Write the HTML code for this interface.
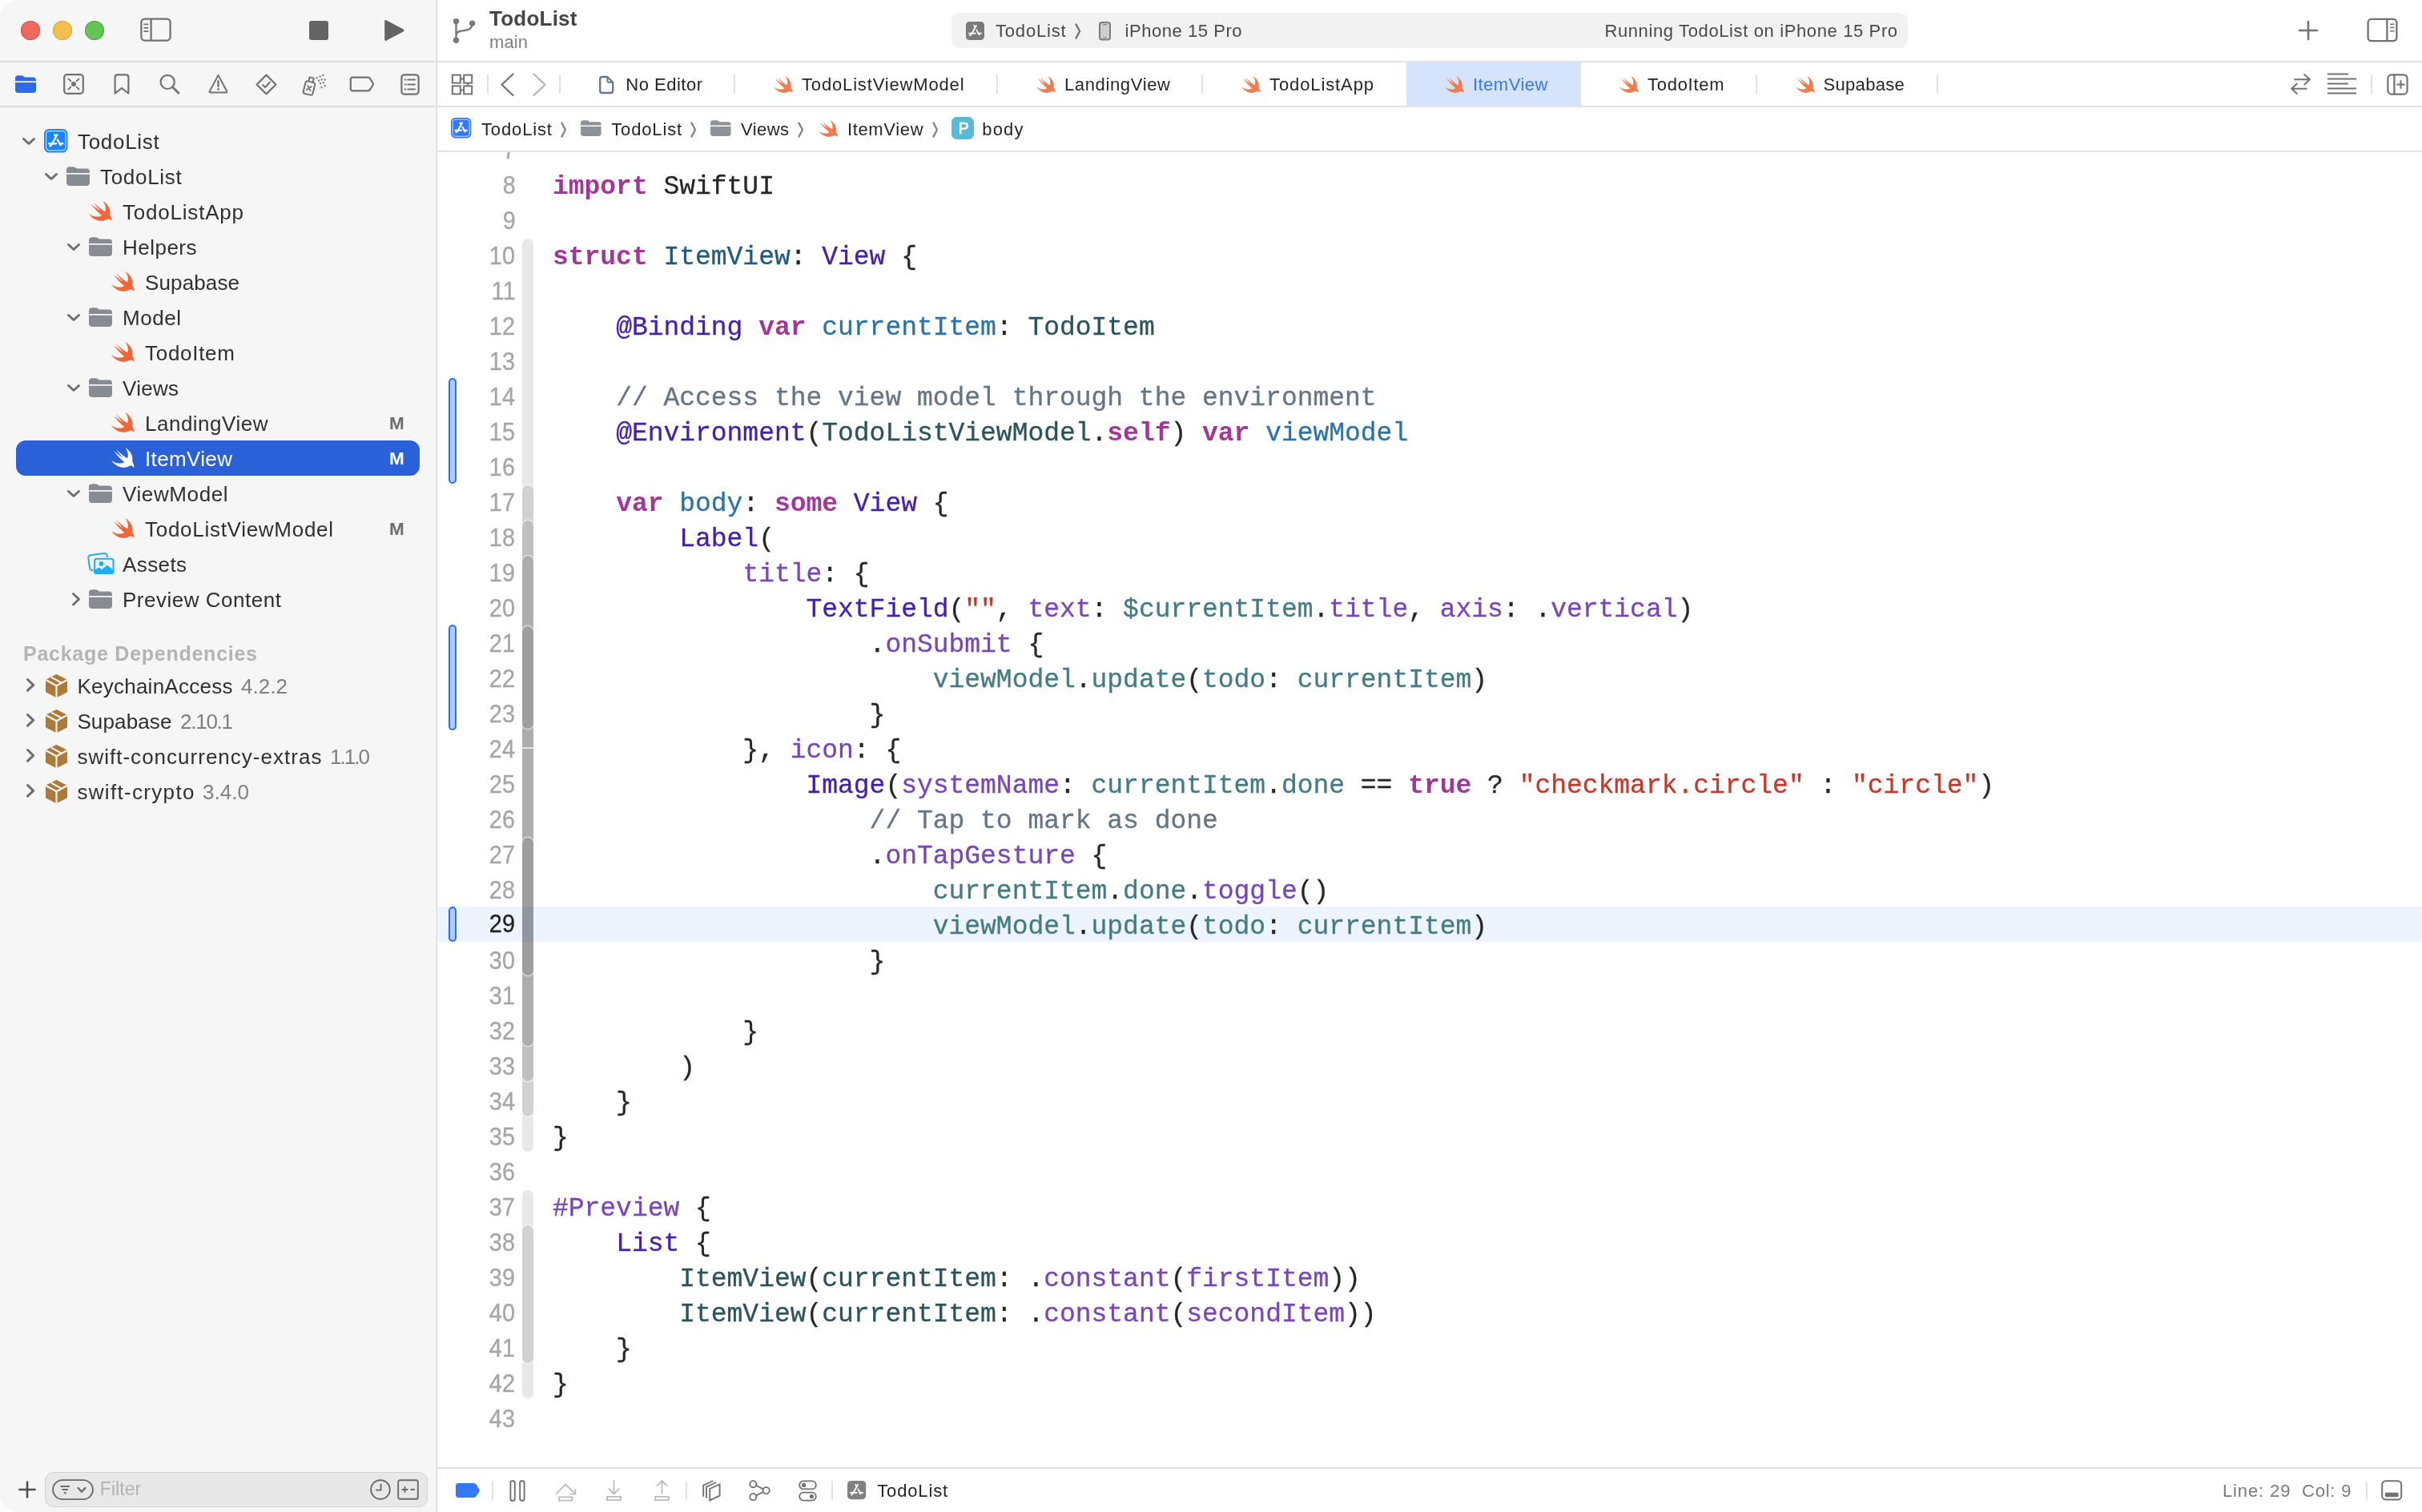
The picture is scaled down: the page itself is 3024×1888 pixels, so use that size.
<!DOCTYPE html>
<html lang="en"><head><meta charset="utf-8"><title>TodoList — ItemView.swift</title>
<style>
html,body{margin:0;padding:0}
body{width:3024px;height:1888px;position:relative;overflow:hidden;background:#fff;font-family:"Liberation Sans",sans-serif}
.t{position:absolute;white-space:pre;font-family:"Liberation Sans",sans-serif}
.ln{font-size:32px;line-height:40px;letter-spacing:.4px;transform:scaleX(.9);transform-origin:100% 50%;-webkit-text-stroke:.35px}
.m{font-family:"Liberation Mono",monospace;-webkit-text-stroke:.3px}
.k{-webkit-text-stroke:0}
#win{position:absolute;left:0;top:0;width:3024px;height:1888px;will-change:transform}
svg{display:block;overflow:visible}
.k{color:#a2379a;font-weight:700}
.c{color:#677583}.s{color:#c6382a}
.td{color:#21597f}.od{color:#2b73a7}
.pc{color:#2b5358}.pf{color:#457b82}
.oc{color:#4421a8}.of{color:#7748b5}
</style></head>
<body>
<div id="win">
<div style="position:absolute;left:0;top:0;width:544px;height:1888px;background:#f6f6f6;border-radius:22px 0 0 22px"></div>
<div style="position:absolute;left:544px;top:0px;width:1px;height:1888px;background:#ededed;"></div>
<div style="position:absolute;left:545px;top:0px;width:1px;height:1888px;background:#dadada;"></div>
<div style="position:absolute;left:0px;top:76px;width:544px;height:2px;background:#dcdcdc;"></div>
<div style="position:absolute;left:0px;top:132px;width:544px;height:2px;background:#dcdcdc;"></div>
<div style="position:absolute;left:26px;top:26px;width:24px;height:24px;border-radius:50%;background:#ed6a5f;box-shadow:inset 0 0 0 1px #d5504a"></div>
<div style="position:absolute;left:66px;top:26px;width:24px;height:24px;border-radius:50%;background:#f5bf4f;box-shadow:inset 0 0 0 1px #d8a13a"></div>
<div style="position:absolute;left:106px;top:26px;width:24px;height:24px;border-radius:50%;background:#62c554;box-shadow:inset 0 0 0 1px #4fa73f"></div>
<svg style="position:absolute;left:28.2px;top:172.3px" width="16" height="9" viewBox="0 0 16 9" ><polyline points="1.5,1.5 8.0,7.5 14.5,1.5" fill="none" stroke="#6e6e6e" stroke-width="3" stroke-linecap="round" stroke-linejoin="round"/></svg>
<svg style="position:absolute;left:54.5px;top:161.2px" width="29.5" height="29.5" viewBox="0 0 30 30" ><rect x="0" y="0" width="30" height="30" rx="6.5" fill="#1b84fb"/><rect x="2.6" y="2.6" width="24.8" height="24.8" rx="4.2" fill="none" stroke="#fff" stroke-opacity=".75" stroke-width="1.3"/><g fill="none" stroke="#fff" stroke-width="2.3" stroke-linecap="round"><path d="M16.6 7.4 L9.2 20.6"/><path d="M13.4 7.4 L15 10.2"/><path d="M16.9 13.6 L20.9 20.6"/><path d="M6.2 18.6 H15.4"/><path d="M19.3 18.6 H23.8"/><path d="M7.6 21.8 L8.3 20.6"/></g></svg>
<div class="t" style="left:97.0px;top:159.99px;font-size:26px;line-height:34px;color:#303030;letter-spacing:0.700px;">TodoList</div>
<svg style="position:absolute;left:56.2px;top:216.3px" width="16" height="9" viewBox="0 0 16 9" ><polyline points="1.5,1.5 8.0,7.5 14.5,1.5" fill="none" stroke="#6e6e6e" stroke-width="3" stroke-linecap="round" stroke-linejoin="round"/></svg>
<svg style="position:absolute;left:83px;top:208px" width="29" height="24" viewBox="0 0 29 24" preserveAspectRatio="none"><path d="M0 7.9V4.2Q0 .2 4 .2H8.2Q10 .2 11.2 1.2L12.2 2Q13 2.6 14.4 2.6H25Q29 2.6 29 6.6V7.9Z" fill="#878c92"/><path d="M0 9.7H29V19.8Q29 24 24.8 24H4.2Q0 24 0 19.8Z" fill="#878c92"/></svg>
<div class="t" style="left:125.0px;top:203.99px;font-size:26px;line-height:34px;color:#303030;letter-spacing:0.700px;">TodoList</div>
<svg style="position:absolute;left:111px;top:251px" width="29" height="25.5" viewBox="2.4 3.4 18.5 16.6" preserveAspectRatio="none"><path d="M13.543 3.41c4.114 2.47 6.545 7.162 5.549 11.131-.024.093-.05.181-.076.272l.002.001c2.062 2.538 1.5 5.258 1.236 4.745-1.072-2.086-3.066-1.568-4.088-1.043a6.803 6.803 0 0 1-.281.158l-.02.012-.002.002c-2.115 1.123-4.957 1.205-7.812-.022a12.568 12.568 0 0 1-5.64-4.838c.649.48 1.35.902 2.097 1.252 3.019 1.414 6.051 1.311 8.197-.002C9.651 12.73 7.101 9.67 5.146 7.191a10.628 10.628 0 0 1-1.005-1.384c2.34 2.142 6.038 4.83 7.365 5.576C8.69 8.408 6.208 4.743 6.324 4.86c4.436 4.47 8.528 6.996 8.528 6.996.154.085.27.154.36.213.085-.215.16-.437.224-.668.708-2.588-.09-5.548-1.893-7.992z" fill="#ef6638"/></svg>
<div class="t" style="left:153.0px;top:247.99px;font-size:26px;line-height:34px;color:#303030;letter-spacing:0.792px;">TodoListApp</div>
<svg style="position:absolute;left:84.2px;top:304.3px" width="16" height="9" viewBox="0 0 16 9" ><polyline points="1.5,1.5 8.0,7.5 14.5,1.5" fill="none" stroke="#6e6e6e" stroke-width="3" stroke-linecap="round" stroke-linejoin="round"/></svg>
<svg style="position:absolute;left:111px;top:296px" width="29" height="24" viewBox="0 0 29 24" preserveAspectRatio="none"><path d="M0 7.9V4.2Q0 .2 4 .2H8.2Q10 .2 11.2 1.2L12.2 2Q13 2.6 14.4 2.6H25Q29 2.6 29 6.6V7.9Z" fill="#878c92"/><path d="M0 9.7H29V19.8Q29 24 24.8 24H4.2Q0 24 0 19.8Z" fill="#878c92"/></svg>
<div class="t" style="left:153.0px;top:291.99px;font-size:26px;line-height:34px;color:#303030;letter-spacing:0.484px;">Helpers</div>
<svg style="position:absolute;left:139px;top:339px" width="29" height="25.5" viewBox="2.4 3.4 18.5 16.6" preserveAspectRatio="none"><path d="M13.543 3.41c4.114 2.47 6.545 7.162 5.549 11.131-.024.093-.05.181-.076.272l.002.001c2.062 2.538 1.5 5.258 1.236 4.745-1.072-2.086-3.066-1.568-4.088-1.043a6.803 6.803 0 0 1-.281.158l-.02.012-.002.002c-2.115 1.123-4.957 1.205-7.812-.022a12.568 12.568 0 0 1-5.64-4.838c.649.48 1.35.902 2.097 1.252 3.019 1.414 6.051 1.311 8.197-.002C9.651 12.73 7.101 9.67 5.146 7.191a10.628 10.628 0 0 1-1.005-1.384c2.34 2.142 6.038 4.83 7.365 5.576C8.69 8.408 6.208 4.743 6.324 4.86c4.436 4.47 8.528 6.996 8.528 6.996.154.085.27.154.36.213.085-.215.16-.437.224-.668.708-2.588-.09-5.548-1.893-7.992z" fill="#ef6638"/></svg>
<div class="t" style="left:181.0px;top:335.99px;font-size:26px;line-height:34px;color:#303030;letter-spacing:0.132px;">Supabase</div>
<svg style="position:absolute;left:84.2px;top:392.3px" width="16" height="9" viewBox="0 0 16 9" ><polyline points="1.5,1.5 8.0,7.5 14.5,1.5" fill="none" stroke="#6e6e6e" stroke-width="3" stroke-linecap="round" stroke-linejoin="round"/></svg>
<svg style="position:absolute;left:111px;top:384px" width="29" height="24" viewBox="0 0 29 24" preserveAspectRatio="none"><path d="M0 7.9V4.2Q0 .2 4 .2H8.2Q10 .2 11.2 1.2L12.2 2Q13 2.6 14.4 2.6H25Q29 2.6 29 6.6V7.9Z" fill="#878c92"/><path d="M0 9.7H29V19.8Q29 24 24.8 24H4.2Q0 24 0 19.8Z" fill="#878c92"/></svg>
<div class="t" style="left:153.0px;top:379.99px;font-size:26px;line-height:34px;color:#303030;letter-spacing:0.557px;">Model</div>
<svg style="position:absolute;left:139px;top:427px" width="29" height="25.5" viewBox="2.4 3.4 18.5 16.6" preserveAspectRatio="none"><path d="M13.543 3.41c4.114 2.47 6.545 7.162 5.549 11.131-.024.093-.05.181-.076.272l.002.001c2.062 2.538 1.5 5.258 1.236 4.745-1.072-2.086-3.066-1.568-4.088-1.043a6.803 6.803 0 0 1-.281.158l-.02.012-.002.002c-2.115 1.123-4.957 1.205-7.812-.022a12.568 12.568 0 0 1-5.64-4.838c.649.48 1.35.902 2.097 1.252 3.019 1.414 6.051 1.311 8.197-.002C9.651 12.73 7.101 9.67 5.146 7.191a10.628 10.628 0 0 1-1.005-1.384c2.34 2.142 6.038 4.83 7.365 5.576C8.69 8.408 6.208 4.743 6.324 4.86c4.436 4.47 8.528 6.996 8.528 6.996.154.085.27.154.36.213.085-.215.16-.437.224-.668.708-2.588-.09-5.548-1.893-7.992z" fill="#ef6638"/></svg>
<div class="t" style="left:181.0px;top:423.99px;font-size:26px;line-height:34px;color:#303030;letter-spacing:0.714px;">TodoItem</div>
<svg style="position:absolute;left:84.2px;top:480.3px" width="16" height="9" viewBox="0 0 16 9" ><polyline points="1.5,1.5 8.0,7.5 14.5,1.5" fill="none" stroke="#6e6e6e" stroke-width="3" stroke-linecap="round" stroke-linejoin="round"/></svg>
<svg style="position:absolute;left:111px;top:472px" width="29" height="24" viewBox="0 0 29 24" preserveAspectRatio="none"><path d="M0 7.9V4.2Q0 .2 4 .2H8.2Q10 .2 11.2 1.2L12.2 2Q13 2.6 14.4 2.6H25Q29 2.6 29 6.6V7.9Z" fill="#878c92"/><path d="M0 9.7H29V19.8Q29 24 24.8 24H4.2Q0 24 0 19.8Z" fill="#878c92"/></svg>
<div class="t" style="left:153.0px;top:467.99px;font-size:26px;line-height:34px;color:#303030;letter-spacing:0.277px;">Views</div>
<svg style="position:absolute;left:139px;top:515px" width="29" height="25.5" viewBox="2.4 3.4 18.5 16.6" preserveAspectRatio="none"><path d="M13.543 3.41c4.114 2.47 6.545 7.162 5.549 11.131-.024.093-.05.181-.076.272l.002.001c2.062 2.538 1.5 5.258 1.236 4.745-1.072-2.086-3.066-1.568-4.088-1.043a6.803 6.803 0 0 1-.281.158l-.02.012-.002.002c-2.115 1.123-4.957 1.205-7.812-.022a12.568 12.568 0 0 1-5.64-4.838c.649.48 1.35.902 2.097 1.252 3.019 1.414 6.051 1.311 8.197-.002C9.651 12.73 7.101 9.67 5.146 7.191a10.628 10.628 0 0 1-1.005-1.384c2.34 2.142 6.038 4.83 7.365 5.576C8.69 8.408 6.208 4.743 6.324 4.86c4.436 4.47 8.528 6.996 8.528 6.996.154.085.27.154.36.213.085-.215.16-.437.224-.668.708-2.588-.09-5.548-1.893-7.992z" fill="#ef6638"/></svg>
<div class="t" style="left:181.0px;top:511.99px;font-size:26px;line-height:34px;color:#303030;letter-spacing:0.500px;">LandingView</div>
<div class="t" style="left:486.0px;top:513.70px;font-size:22.5px;line-height:29px;color:#6d6d6d;font-weight:700;letter-spacing:-1.194px;">M</div>
<div style="position:absolute;left:20px;top:550px;width:504px;height:44px;background:#2a61d9;border-radius:12px;"></div>
<svg style="position:absolute;left:139px;top:559px" width="29" height="25.5" viewBox="2.4 3.4 18.5 16.6" preserveAspectRatio="none"><path d="M13.543 3.41c4.114 2.47 6.545 7.162 5.549 11.131-.024.093-.05.181-.076.272l.002.001c2.062 2.538 1.5 5.258 1.236 4.745-1.072-2.086-3.066-1.568-4.088-1.043a6.803 6.803 0 0 1-.281.158l-.02.012-.002.002c-2.115 1.123-4.957 1.205-7.812-.022a12.568 12.568 0 0 1-5.64-4.838c.649.48 1.35.902 2.097 1.252 3.019 1.414 6.051 1.311 8.197-.002C9.651 12.73 7.101 9.67 5.146 7.191a10.628 10.628 0 0 1-1.005-1.384c2.34 2.142 6.038 4.83 7.365 5.576C8.69 8.408 6.208 4.743 6.324 4.86c4.436 4.47 8.528 6.996 8.528 6.996.154.085.27.154.36.213.085-.215.16-.437.224-.668.708-2.588-.09-5.548-1.893-7.992z" fill="#fff"/></svg>
<div class="t" style="left:181.0px;top:555.99px;font-size:26px;line-height:34px;color:#fff;letter-spacing:0.353px;">ItemView</div>
<div class="t" style="left:486.0px;top:557.70px;font-size:22.5px;line-height:29px;color:#fff;font-weight:700;letter-spacing:-1.194px;">M</div>
<svg style="position:absolute;left:84.2px;top:612.3px" width="16" height="9" viewBox="0 0 16 9" ><polyline points="1.5,1.5 8.0,7.5 14.5,1.5" fill="none" stroke="#6e6e6e" stroke-width="3" stroke-linecap="round" stroke-linejoin="round"/></svg>
<svg style="position:absolute;left:111px;top:604px" width="29" height="24" viewBox="0 0 29 24" preserveAspectRatio="none"><path d="M0 7.9V4.2Q0 .2 4 .2H8.2Q10 .2 11.2 1.2L12.2 2Q13 2.6 14.4 2.6H25Q29 2.6 29 6.6V7.9Z" fill="#878c92"/><path d="M0 9.7H29V19.8Q29 24 24.8 24H4.2Q0 24 0 19.8Z" fill="#878c92"/></svg>
<div class="t" style="left:153.0px;top:599.99px;font-size:26px;line-height:34px;color:#303030;letter-spacing:0.607px;">ViewModel</div>
<svg style="position:absolute;left:139px;top:647px" width="29" height="25.5" viewBox="2.4 3.4 18.5 16.6" preserveAspectRatio="none"><path d="M13.543 3.41c4.114 2.47 6.545 7.162 5.549 11.131-.024.093-.05.181-.076.272l.002.001c2.062 2.538 1.5 5.258 1.236 4.745-1.072-2.086-3.066-1.568-4.088-1.043a6.803 6.803 0 0 1-.281.158l-.02.012-.002.002c-2.115 1.123-4.957 1.205-7.812-.022a12.568 12.568 0 0 1-5.64-4.838c.649.48 1.35.902 2.097 1.252 3.019 1.414 6.051 1.311 8.197-.002C9.651 12.73 7.101 9.67 5.146 7.191a10.628 10.628 0 0 1-1.005-1.384c2.34 2.142 6.038 4.83 7.365 5.576C8.69 8.408 6.208 4.743 6.324 4.86c4.436 4.47 8.528 6.996 8.528 6.996.154.085.27.154.36.213.085-.215.16-.437.224-.668.708-2.588-.09-5.548-1.893-7.992z" fill="#ef6638"/></svg>
<div class="t" style="left:181.0px;top:643.99px;font-size:26px;line-height:34px;color:#303030;letter-spacing:0.719px;">TodoListViewModel</div>
<div class="t" style="left:486.0px;top:645.70px;font-size:22.5px;line-height:29px;color:#6d6d6d;font-weight:700;letter-spacing:-1.194px;">M</div>
<svg style="position:absolute;left:108.5px;top:689px" width="34" height="29" viewBox="0 0 34 29" ><rect x="2" y="3.1" width="23.5" height="18.9" rx="3.2" fill="none" stroke="#1eaef6" stroke-width="2" transform="rotate(-8 13.5 12.2)"/><rect x="7.3" y="6.9" width="27" height="21.9" rx="4.2" fill="#f6f6f6"/><rect x="9.1" y="8.7" width="23.4" height="18.3" rx="2.6" fill="#f6f6f6" stroke="#1eaef6" stroke-width="2"/><circle cx="17.4" cy="14.9" r="2.9" fill="#1eaef6"/><path d="M9.6 22.6L14.2 19.8Q14.7 19.6 15.2 19.9L18 21.9L24.4 17.2Q25 16.8 25.6 17.2L32 22.2V26.6H9.6Z" fill="#1eaef6"/></svg>
<div class="t" style="left:153.0px;top:687.99px;font-size:26px;line-height:34px;color:#303030;letter-spacing:0.394px;">Assets</div>
<svg style="position:absolute;left:89.5px;top:740px" width="10" height="16.5" viewBox="0 0 10 16.5" ><polyline points="1.5,1.5 8.5,8.25 1.5,15.0" fill="none" stroke="#6e6e6e" stroke-width="3" stroke-linecap="round" stroke-linejoin="round"/></svg>
<svg style="position:absolute;left:111px;top:736px" width="29" height="24" viewBox="0 0 29 24" preserveAspectRatio="none"><path d="M0 7.9V4.2Q0 .2 4 .2H8.2Q10 .2 11.2 1.2L12.2 2Q13 2.6 14.4 2.6H25Q29 2.6 29 6.6V7.9Z" fill="#878c92"/><path d="M0 9.7H29V19.8Q29 24 24.8 24H4.2Q0 24 0 19.8Z" fill="#878c92"/></svg>
<div class="t" style="left:153.0px;top:731.99px;font-size:26px;line-height:34px;color:#303030;letter-spacing:0.513px;">Preview Content</div>
<div class="t" style="left:29.0px;top:800.34px;font-size:25px;line-height:32px;color:#b4b4b4;font-weight:700;letter-spacing:0.742px;">Package Dependencies</div>
<svg style="position:absolute;left:32.9px;top:847px" width="10.2" height="16.7" viewBox="0 0 10.2 16.7" ><polyline points="1.5,1.5 8.7,8.35 1.5,15.2" fill="none" stroke="#6e6e6e" stroke-width="3" stroke-linecap="round" stroke-linejoin="round"/></svg>
<svg style="position:absolute;left:56.5px;top:841.5px" width="27" height="29" viewBox="0 0 27 29" ><path d="M13.5 .6 L26.2 7.3 V21.7 L13.5 28.4 L.8 21.7 V7.3 Z" fill="#ad7b39" stroke="#ad7b39" stroke-width="1.6" stroke-linejoin="round"/><path d="M.2 7 L13.5 14.2 L26.8 7 M13.5 14.2 V29" fill="none" stroke="#f6f6f6" stroke-width="2.1"/><path d="M7 3.6 L19.9 10.6" fill="none" stroke="#f6f6f6" stroke-width="2.1"/></svg>
<div class="t" style="left:96.4px;top:839.99px;font-size:26px;line-height:34px;color:#303030;letter-spacing:0.249px;">KeychainAccess</div>
<div class="t" style="left:301.0px;top:839.99px;font-size:26px;line-height:34px;color:#7f7f7f;letter-spacing:0.051px;">4.2.2</div>
<svg style="position:absolute;left:32.9px;top:891px" width="10.2" height="16.7" viewBox="0 0 10.2 16.7" ><polyline points="1.5,1.5 8.7,8.35 1.5,15.2" fill="none" stroke="#6e6e6e" stroke-width="3" stroke-linecap="round" stroke-linejoin="round"/></svg>
<svg style="position:absolute;left:56.5px;top:885.5px" width="27" height="29" viewBox="0 0 27 29" ><path d="M13.5 .6 L26.2 7.3 V21.7 L13.5 28.4 L.8 21.7 V7.3 Z" fill="#ad7b39" stroke="#ad7b39" stroke-width="1.6" stroke-linejoin="round"/><path d="M.2 7 L13.5 14.2 L26.8 7 M13.5 14.2 V29" fill="none" stroke="#f6f6f6" stroke-width="2.1"/><path d="M7 3.6 L19.9 10.6" fill="none" stroke="#f6f6f6" stroke-width="2.1"/></svg>
<div class="t" style="left:96.4px;top:883.99px;font-size:26px;line-height:34px;color:#303030;letter-spacing:0.132px;">Supabase</div>
<div class="t" style="left:225.0px;top:883.99px;font-size:26px;line-height:34px;color:#7f7f7f;letter-spacing:-1.253px;">2.10.1</div>
<svg style="position:absolute;left:32.9px;top:935px" width="10.2" height="16.7" viewBox="0 0 10.2 16.7" ><polyline points="1.5,1.5 8.7,8.35 1.5,15.2" fill="none" stroke="#6e6e6e" stroke-width="3" stroke-linecap="round" stroke-linejoin="round"/></svg>
<svg style="position:absolute;left:56.5px;top:929.5px" width="27" height="29" viewBox="0 0 27 29" ><path d="M13.5 .6 L26.2 7.3 V21.7 L13.5 28.4 L.8 21.7 V7.3 Z" fill="#ad7b39" stroke="#ad7b39" stroke-width="1.6" stroke-linejoin="round"/><path d="M.2 7 L13.5 14.2 L26.8 7 M13.5 14.2 V29" fill="none" stroke="#f6f6f6" stroke-width="2.1"/><path d="M7 3.6 L19.9 10.6" fill="none" stroke="#f6f6f6" stroke-width="2.1"/></svg>
<div class="t" style="left:96.4px;top:927.99px;font-size:26px;line-height:34px;color:#303030;letter-spacing:1.012px;">swift-concurrency-extras</div>
<div class="t" style="left:412.0px;top:927.99px;font-size:26px;line-height:34px;color:#7f7f7f;letter-spacing:-1.949px;">1.1.0</div>
<svg style="position:absolute;left:32.9px;top:979px" width="10.2" height="16.7" viewBox="0 0 10.2 16.7" ><polyline points="1.5,1.5 8.7,8.35 1.5,15.2" fill="none" stroke="#6e6e6e" stroke-width="3" stroke-linecap="round" stroke-linejoin="round"/></svg>
<svg style="position:absolute;left:56.5px;top:973.5px" width="27" height="29" viewBox="0 0 27 29" ><path d="M13.5 .6 L26.2 7.3 V21.7 L13.5 28.4 L.8 21.7 V7.3 Z" fill="#ad7b39" stroke="#ad7b39" stroke-width="1.6" stroke-linejoin="round"/><path d="M.2 7 L13.5 14.2 L26.8 7 M13.5 14.2 V29" fill="none" stroke="#f6f6f6" stroke-width="2.1"/><path d="M7 3.6 L19.9 10.6" fill="none" stroke="#f6f6f6" stroke-width="2.1"/></svg>
<div class="t" style="left:96.4px;top:971.99px;font-size:26px;line-height:34px;color:#303030;letter-spacing:1.324px;">swift-crypto</div>
<div class="t" style="left:253.0px;top:971.99px;font-size:26px;line-height:34px;color:#7f7f7f;letter-spacing:0.051px;">3.4.0</div>
<svg style="position:absolute;left:175px;top:22px" width="39" height="30" viewBox="0 0 39 30" ><g fill="none" stroke="#727272" stroke-width="2.3" stroke-linecap="round" stroke-linejoin="round"><rect x="1.4" y="1.6" width="36.2" height="27" rx="4.4"/><path d="M13.6 2.6V27.6"/><path d="M5.2 8.4H9.6M5.2 12.8H9.6M5.2 17.2H9.6" stroke-width="1.8"/></g></svg>
<div style="position:absolute;left:386px;top:26px;width:24px;height:24px;background:#646464;border-radius:3px;"></div>
<svg style="position:absolute;left:479px;top:24px" width="27" height="28" viewBox="0 0 27 28" ><path d="M1.2 2.4Q1.2 .2 3.2 1.3L24.6 12.6Q26.6 14 24.6 15.4L3.2 26.7Q1.2 27.8 1.2 25.6Z" fill="#646464"/></svg>
<div style="position:absolute;left:546px;top:76px;width:2478px;height:2px;background:#e3e3e3;"></div>
<div style="position:absolute;left:546px;top:132px;width:2478px;height:2px;background:#e3e3e3;"></div>
<div style="position:absolute;left:546px;top:188px;width:2478px;height:2px;background:#e3e3e3;"></div>
<svg style="position:absolute;left:564px;top:22px" width="32" height="33" viewBox="0 0 32 33" ><g fill="none" stroke="#727272" stroke-width="2.4" stroke-linecap="round" stroke-linejoin="round"><circle cx="5.5" cy="4.6" r="3.7" fill="#7a7a7a" stroke="none"/><circle cx="25.6" cy="7.1" r="3.7" fill="#7a7a7a" stroke="none"/><circle cx="5.5" cy="28.2" r="3.7" fill="#7a7a7a" stroke="none"/><path d="M5.5 4.6V28.2M25.6 7.1C25.4 17 17 15.2 10 17C6.6 18 5.5 20.2 5.5 23" stroke="#7a7a7a"/></g></svg>
<div class="t" style="left:611.0px;top:6.19px;font-size:26px;line-height:34px;color:#454545;font-weight:700;letter-spacing:0.232px;">TodoList</div>
<div class="t" style="left:611.0px;top:38.18px;font-size:22px;line-height:29px;color:#808080;letter-spacing:0.113px;">main</div>
<div style="position:absolute;left:1188px;top:16px;width:1194px;height:44px;background:#f2f2f2;border-radius:11px;"></div>
<svg style="position:absolute;left:1206px;top:27px" width="23" height="23" viewBox="0 0 30 30" ><rect x="0" y="0" width="30" height="30" rx="6" fill="#7b7b7b"/><g transform="translate(15 14.6) scale(1.13) translate(-15 -14.6)"><g fill="none" stroke="#fff" stroke-width="2" stroke-linecap="round"><path d="M16.6 7.4 L9.2 20.6"/><path d="M13.4 7.4 L15 10.2"/><path d="M16.9 13.6 L20.9 20.6"/><path d="M6.2 18.6 H15.4"/><path d="M19.3 18.6 H23.8"/><path d="M7.6 21.8 L8.3 20.6"/></g></g></svg>
<div class="t" style="left:1243.0px;top:24.28px;font-size:22px;line-height:29px;color:#4a4a4a;letter-spacing:0.814px;">TodoList</div>
<svg style="position:absolute;left:1342px;top:28.5px" width="8" height="20" viewBox="0 0 8 20" ><path d="M1.4 1.4L6.2 10L1.4 18.6" fill="none" stroke="#6e6e6e" stroke-width="2.2" stroke-linecap="round" stroke-linejoin="round"/></svg>
<svg style="position:absolute;left:1372px;top:26.5px" width="15" height="23.5" viewBox="0 0 15 23.5" ><rect x="1" y="1" width="13" height="21.5" rx="3" fill="#cfcfcf" stroke="#7d7d7d" stroke-width="2"/><path d="M5.2 3.6H9.8M5.2 20H9.8" stroke="#7d7d7d" stroke-width="1.2"/></svg>
<div class="t" style="left:1404.5px;top:24.28px;font-size:22px;line-height:29px;color:#4a4a4a;letter-spacing:0.549px;">iPhone 15 Pro</div>
<div class="t" style="left:2003.4px;top:24.28px;font-size:22px;line-height:29px;color:#4a4a4a;letter-spacing:0.624px;">Running TodoList on iPhone 15 Pro</div>
<svg style="position:absolute;left:2869px;top:25px" width="26" height="26" viewBox="0 0 26 26" ><g fill="none" stroke="#727272" stroke-width="2.6" stroke-linecap="round" stroke-linejoin="round"><path d="M13 2V24M2 13H24"/></g></svg>
<svg style="position:absolute;left:2954.5px;top:21.5px" width="39" height="31" viewBox="0 0 39 31" ><g fill="none" stroke="#727272" stroke-width="2.3" stroke-linecap="round" stroke-linejoin="round"><rect x="1.6" y="1.8" width="35.8" height="27.4" rx="4.4"/><path d="M25.4 2.8V28.2"/><path d="M29.6 8.2H34M29.6 12.5H34M29.6 16.8H34" stroke-width="1.6"/></g></svg>
<svg style="position:absolute;left:19px;top:94px" width="26" height="22" viewBox="0 0 29 24" preserveAspectRatio="none"><path d="M0 7.9V4.2Q0 .2 4 .2H8.2Q10 .2 11.2 1.2L12.2 2Q13 2.6 14.4 2.6H25Q29 2.6 29 6.6V7.9Z" fill="#2f6be9"/><path d="M0 9.7H29V19.8Q29 24 24.8 24H4.2Q0 24 0 19.8Z" fill="#2f6be9"/></svg>
<svg style="position:absolute;left:79px;top:92px" width="26" height="26" viewBox="0 0 26 26" ><g fill="none" stroke="#727272" stroke-width="2.2" stroke-linecap="round" stroke-linejoin="round"><rect x="1.2" y="1.2" width="23.6" height="23.6" rx="3.4"/><circle cx="13" cy="13" r="3" fill="#727272" stroke="none"/><path d="M6.4 6.4L9.4 9.4M19.6 6.4L16.6 9.4M6.4 19.6L9.4 16.6M19.6 19.6L16.6 16.6" stroke-width="1.9"/></g></svg>
<svg style="position:absolute;left:142px;top:92px" width="20" height="27" viewBox="0 0 20 27" ><g fill="none" stroke="#727272" stroke-width="2.2" stroke-linecap="round" stroke-linejoin="round"><path d="M1.6 24.6V4.4Q1.6 1.3 4.6 1.3H15.4Q18.4 1.3 18.4 4.4V24.6L10 18Z"/></g></svg>
<svg style="position:absolute;left:199px;top:92px" width="26" height="26" viewBox="0 0 26 26" ><g fill="none" stroke="#727272" stroke-width="2.2" stroke-linecap="round" stroke-linejoin="round"><circle cx="10.2" cy="10.4" r="8.6"/><path d="M16.6 16.8L24 24.2" stroke-width="2.8"/></g></svg>
<svg style="position:absolute;left:259.5px;top:91.5px" width="25" height="25" viewBox="0 0 25 25" ><g fill="none" stroke="#727272" stroke-width="2" stroke-linecap="round" stroke-linejoin="round"><path d="M12.5 1.9L23.4 22.2Q23.6 23.4 22.4 23.4H2.6Q1.4 23.4 1.6 22.2Z"/><path d="M12.5 9.4V15.8" stroke-width="2.4"/><circle cx="12.5" cy="19.4" r="1.3" fill="#727272" stroke="none"/></g></svg>
<svg style="position:absolute;left:318.5px;top:91.5px" width="27" height="27" viewBox="0 0 27 27" ><g fill="none" stroke="#727272" stroke-width="2.2" stroke-linecap="round" stroke-linejoin="round"><path d="M13.5 1.6L25.4 13.5L13.5 25.4L1.6 13.5Z" stroke-linejoin="round"/><path d="M9.2 14.2L12.2 17L17.8 10.6" stroke-width="2.2"/></g></svg>
<svg style="position:absolute;left:377px;top:91.5px" width="31" height="28" viewBox="0 0 31 28" ><g fill="none" stroke="#727272" stroke-width="2" stroke-linecap="round" stroke-linejoin="round"><g transform="rotate(14 9 17)"><rect x="3.2" y="10" width="12" height="16" rx="2.4"/><path d="M6.6 10V4.6H11.8V10"/><path d="M6.8 15.4L11.6 20.6M11.6 15.4L6.8 20.6" stroke-width="1.8"/></g><g fill="#727272" stroke="none"><rect x="17.6" y="4.2" width="2" height="2"/><rect x="21.6" y="2.6" width="2" height="2"/><rect x="25.4" y=".8" width="2" height="2"/><rect x="20" y="7.6" width="2" height="2"/><rect x="23.6" y="6.4" width="2" height="2"/><rect x="27.6" y="6.6" width="2" height="2"/><rect x="22" y="11" width="2" height="2"/><rect x="25.8" y="10.4" width="2" height="2"/><rect x="27.8" y="14.2" width="2" height="2"/><rect x="23.6" y="16.2" width="2" height="2"/></g></g></svg>
<svg style="position:absolute;left:436px;top:95px" width="32" height="20" viewBox="0 0 32 20" ><g fill="none" stroke="#727272" stroke-width="2.2" stroke-linecap="round" stroke-linejoin="round"><path d="M4.6 1.6H23.4Q25 1.6 26 3L29.8 9.2Q30.2 10 29.8 10.8L26 17Q25 18.4 23.4 18.4H4.6Q1.8 18.4 1.8 15.6V4.4Q1.8 1.6 4.6 1.6Z"/></g></svg>
<svg style="position:absolute;left:500px;top:91.5px" width="24" height="27" viewBox="0 0 24 27" ><g fill="none" stroke="#727272" stroke-width="2.2" stroke-linecap="round" stroke-linejoin="round"><rect x="1.4" y="1.4" width="21.2" height="24.2" rx="3.4"/><path d="M9.2 7.6H18M9.2 13.5H18M9.2 19.4H18" stroke-width="2"/><path d="M5.6 7.6H6.4M5.6 13.5H6.4M5.6 19.4H6.4" stroke-width="2"/></g></svg>
<svg style="position:absolute;left:563px;top:91.5px" width="28" height="27" viewBox="0 0 28 27" ><g fill="none" stroke="#727272" stroke-width="2" stroke-linecap="butt" stroke-linejoin="miter"><rect x="1.8" y="1.6" width="10" height="10" /><rect x="16.2" y="1.6" width="10" height="10"/><rect x="1.8" y="15.4" width="10" height="10"/><rect x="16.2" y="15.4" width="10" height="10"/><path d="M11.8 6.6H16.2M21.2 11.6V15.4M11.8 20.4H16.2" /></g></svg>
<div style="position:absolute;left:608px;top:93px;width:2px;height:24px;background:#e2e2e2;"></div>
<svg style="position:absolute;left:625px;top:90.5px" width="17" height="29.5" viewBox="0 0 17 29.5" ><polyline points="15.5,1.5 1.5,14.75 15.5,28.0" fill="none" stroke="#767676" stroke-width="2.4" stroke-linecap="round" stroke-linejoin="round"/></svg>
<svg style="position:absolute;left:665px;top:90.5px" width="17" height="29.5" viewBox="0 0 17 29.5" ><polyline points="1.5,1.5 15.5,14.75 1.5,28.0" fill="none" stroke="#b8b8b8" stroke-width="2.4" stroke-linecap="round" stroke-linejoin="round"/></svg>
<div style="position:absolute;left:698px;top:93px;width:2px;height:24px;background:#e2e2e2;"></div>
<svg style="position:absolute;left:747px;top:93.5px" width="21" height="24" viewBox="0 0 21 24" ><g fill="none" stroke="#6b7785" stroke-width="2.3" stroke-linecap="round" stroke-linejoin="round"><path d="M4.8 2H11.4L18.2 8.8V19.4Q18.2 22 15.6 22H4.8Q2.2 22 2.2 19.4V4.6Q2.2 2 4.8 2Z"/><path d="M11.4 2.2V6.6Q11.4 8.8 13.6 8.8H18" stroke-width="2"/></g></svg>
<div class="t" style="left:781.3px;top:91.18px;font-size:22px;line-height:29px;color:#262626;letter-spacing:0.505px;">No Editor</div>
<div style="position:absolute;left:916px;top:93px;width:2px;height:24px;background:#e2e2e2;"></div>
<svg style="position:absolute;left:965.6px;top:94.5px" width="24" height="21.5" viewBox="2.4 3.4 18.5 16.6" preserveAspectRatio="none"><path d="M13.543 3.41c4.114 2.47 6.545 7.162 5.549 11.131-.024.093-.05.181-.076.272l.002.001c2.062 2.538 1.5 5.258 1.236 4.745-1.072-2.086-3.066-1.568-4.088-1.043a6.803 6.803 0 0 1-.281.158l-.02.012-.002.002c-2.115 1.123-4.957 1.205-7.812-.022a12.568 12.568 0 0 1-5.64-4.838c.649.48 1.35.902 2.097 1.252 3.019 1.414 6.051 1.311 8.197-.002C9.651 12.73 7.101 9.67 5.146 7.191a10.628 10.628 0 0 1-1.005-1.384c2.34 2.142 6.038 4.83 7.365 5.576C8.69 8.408 6.208 4.743 6.324 4.86c4.436 4.47 8.528 6.996 8.528 6.996.154.085.27.154.36.213.085-.215.16-.437.224-.668.708-2.588-.09-5.548-1.893-7.992z" fill="#f07c4e"/></svg>
<div class="t" style="left:1001.0px;top:91.18px;font-size:22px;line-height:29px;color:#262626;letter-spacing:0.837px;">TodoListViewModel</div>
<div style="position:absolute;left:1244px;top:93px;width:2px;height:24px;background:#e2e2e2;"></div>
<svg style="position:absolute;left:1293.9px;top:94.5px" width="24" height="21.5" viewBox="2.4 3.4 18.5 16.6" preserveAspectRatio="none"><path d="M13.543 3.41c4.114 2.47 6.545 7.162 5.549 11.131-.024.093-.05.181-.076.272l.002.001c2.062 2.538 1.5 5.258 1.236 4.745-1.072-2.086-3.066-1.568-4.088-1.043a6.803 6.803 0 0 1-.281.158l-.02.012-.002.002c-2.115 1.123-4.957 1.205-7.812-.022a12.568 12.568 0 0 1-5.64-4.838c.649.48 1.35.902 2.097 1.252 3.019 1.414 6.051 1.311 8.197-.002C9.651 12.73 7.101 9.67 5.146 7.191a10.628 10.628 0 0 1-1.005-1.384c2.34 2.142 6.038 4.83 7.365 5.576C8.69 8.408 6.208 4.743 6.324 4.86c4.436 4.47 8.528 6.996 8.528 6.996.154.085.27.154.36.213.085-.215.16-.437.224-.668.708-2.588-.09-5.548-1.893-7.992z" fill="#f07c4e"/></svg>
<div class="t" style="left:1329.0px;top:91.18px;font-size:22px;line-height:29px;color:#262626;letter-spacing:0.634px;">LandingView</div>
<div style="position:absolute;left:1500px;top:93px;width:2px;height:24px;background:#e2e2e2;"></div>
<svg style="position:absolute;left:1549.6px;top:94.5px" width="24" height="21.5" viewBox="2.4 3.4 18.5 16.6" preserveAspectRatio="none"><path d="M13.543 3.41c4.114 2.47 6.545 7.162 5.549 11.131-.024.093-.05.181-.076.272l.002.001c2.062 2.538 1.5 5.258 1.236 4.745-1.072-2.086-3.066-1.568-4.088-1.043a6.803 6.803 0 0 1-.281.158l-.02.012-.002.002c-2.115 1.123-4.957 1.205-7.812-.022a12.568 12.568 0 0 1-5.64-4.838c.649.48 1.35.902 2.097 1.252 3.019 1.414 6.051 1.311 8.197-.002C9.651 12.73 7.101 9.67 5.146 7.191a10.628 10.628 0 0 1-1.005-1.384c2.34 2.142 6.038 4.83 7.365 5.576C8.69 8.408 6.208 4.743 6.324 4.86c4.436 4.47 8.528 6.996 8.528 6.996.154.085.27.154.36.213.085-.215.16-.437.224-.668.708-2.588-.09-5.548-1.893-7.992z" fill="#f07c4e"/></svg>
<div class="t" style="left:1585.0px;top:91.18px;font-size:22px;line-height:29px;color:#262626;letter-spacing:0.893px;">TodoListApp</div>
<div style="position:absolute;left:1756px;top:78px;width:218px;height:54px;background:#d5e4fc;"></div>
<svg style="position:absolute;left:1803.7px;top:94.5px" width="24" height="21.5" viewBox="2.4 3.4 18.5 16.6" preserveAspectRatio="none"><path d="M13.543 3.41c4.114 2.47 6.545 7.162 5.549 11.131-.024.093-.05.181-.076.272l.002.001c2.062 2.538 1.5 5.258 1.236 4.745-1.072-2.086-3.066-1.568-4.088-1.043a6.803 6.803 0 0 1-.281.158l-.02.012-.002.002c-2.115 1.123-4.957 1.205-7.812-.022a12.568 12.568 0 0 1-5.64-4.838c.649.48 1.35.902 2.097 1.252 3.019 1.414 6.051 1.311 8.197-.002C9.651 12.73 7.101 9.67 5.146 7.191a10.628 10.628 0 0 1-1.005-1.384c2.34 2.142 6.038 4.83 7.365 5.576C8.69 8.408 6.208 4.743 6.324 4.86c4.436 4.47 8.528 6.996 8.528 6.996.154.085.27.154.36.213.085-.215.16-.437.224-.668.708-2.588-.09-5.548-1.893-7.992z" fill="#f07c4e"/></svg>
<div class="t" style="left:1838.9px;top:91.18px;font-size:22px;line-height:29px;color:#3478f6;letter-spacing:0.494px;">ItemView</div>
<svg style="position:absolute;left:2021.8px;top:94.5px" width="24" height="21.5" viewBox="2.4 3.4 18.5 16.6" preserveAspectRatio="none"><path d="M13.543 3.41c4.114 2.47 6.545 7.162 5.549 11.131-.024.093-.05.181-.076.272l.002.001c2.062 2.538 1.5 5.258 1.236 4.745-1.072-2.086-3.066-1.568-4.088-1.043a6.803 6.803 0 0 1-.281.158l-.02.012-.002.002c-2.115 1.123-4.957 1.205-7.812-.022a12.568 12.568 0 0 1-5.64-4.838c.649.48 1.35.902 2.097 1.252 3.019 1.414 6.051 1.311 8.197-.002C9.651 12.73 7.101 9.67 5.146 7.191a10.628 10.628 0 0 1-1.005-1.384c2.34 2.142 6.038 4.83 7.365 5.576C8.69 8.408 6.208 4.743 6.324 4.86c4.436 4.47 8.528 6.996 8.528 6.996.154.085.27.154.36.213.085-.215.16-.437.224-.668.708-2.588-.09-5.548-1.893-7.992z" fill="#f07c4e"/></svg>
<div class="t" style="left:2057.0px;top:91.18px;font-size:22px;line-height:29px;color:#262626;letter-spacing:0.722px;">TodoItem</div>
<div style="position:absolute;left:2192px;top:93px;width:2px;height:24px;background:#e2e2e2;"></div>
<svg style="position:absolute;left:2241.8px;top:94.5px" width="24" height="21.5" viewBox="2.4 3.4 18.5 16.6" preserveAspectRatio="none"><path d="M13.543 3.41c4.114 2.47 6.545 7.162 5.549 11.131-.024.093-.05.181-.076.272l.002.001c2.062 2.538 1.5 5.258 1.236 4.745-1.072-2.086-3.066-1.568-4.088-1.043a6.803 6.803 0 0 1-.281.158l-.02.012-.002.002c-2.115 1.123-4.957 1.205-7.812-.022a12.568 12.568 0 0 1-5.64-4.838c.649.48 1.35.902 2.097 1.252 3.019 1.414 6.051 1.311 8.197-.002C9.651 12.73 7.101 9.67 5.146 7.191a10.628 10.628 0 0 1-1.005-1.384c2.34 2.142 6.038 4.83 7.365 5.576C8.69 8.408 6.208 4.743 6.324 4.86c4.436 4.47 8.528 6.996 8.528 6.996.154.085.27.154.36.213.085-.215.16-.437.224-.668.708-2.588-.09-5.548-1.893-7.992z" fill="#f07c4e"/></svg>
<div class="t" style="left:2276.5px;top:91.18px;font-size:22px;line-height:29px;color:#262626;letter-spacing:0.319px;">Supabase</div>
<div style="position:absolute;left:2418px;top:93px;width:2px;height:24px;background:#e2e2e2;"></div>
<svg style="position:absolute;left:2859px;top:91px" width="27" height="28" viewBox="0 0 27 28" ><g fill="none" stroke="#727272" stroke-width="2" stroke-linecap="butt" stroke-linejoin="miter"><path d="M5.4 8.2H24.6M17.6 1.4L24.8 8.2L17.6 15M21.6 19.8H2.4M9.4 13L2.2 19.8L9.4 26.6"/></g></svg>
<svg style="position:absolute;left:2906px;top:91px" width="36" height="27" viewBox="0 0 36 27" ><g fill="none" stroke="#727272" stroke-width="2" stroke-linecap="butt" stroke-linejoin="round"><path d="M0 1.4H26M0 7.4H36M0 13.4H26M0 19.4H36M0 25.4H36"/></g></svg>
<div style="position:absolute;left:2960px;top:93px;width:2px;height:24px;background:#e2e2e2;"></div>
<svg style="position:absolute;left:2979.5px;top:91.5px" width="27" height="27" viewBox="0 0 27 27" ><g fill="none" stroke="#727272" stroke-width="2.2" stroke-linecap="round" stroke-linejoin="round"><rect x="1.4" y="1.4" width="24.2" height="24.2" rx="4.6"/><path d="M9.4 2.4V24.6"/><path d="M17.5 9V18M13 13.5H22" stroke-width="2"/></g></svg>
<svg style="position:absolute;left:562.8px;top:147.3px" width="25.4" height="25.4" viewBox="0 0 30 30" ><rect x="0" y="0" width="30" height="30" rx="6.5" fill="#3478f6"/><rect x="2.6" y="2.6" width="24.8" height="24.8" rx="4.2" fill="none" stroke="#fff" stroke-opacity=".75" stroke-width="1.3"/><g fill="none" stroke="#fff" stroke-width="2.3" stroke-linecap="round"><path d="M16.6 7.4 L9.2 20.6"/><path d="M13.4 7.4 L15 10.2"/><path d="M16.9 13.6 L20.9 20.6"/><path d="M6.2 18.6 H15.4"/><path d="M19.3 18.6 H23.8"/><path d="M7.6 21.8 L8.3 20.6"/></g></svg>
<div class="t" style="left:601.0px;top:146.78px;font-size:22px;line-height:29px;color:#262626;letter-spacing:0.857px;">TodoList</div>
<svg style="position:absolute;left:700.4px;top:151.5px" width="8" height="20" viewBox="0 0 8 20" ><path d="M1.4 1.4L6 10L1.4 18.6" fill="none" stroke="#858585" stroke-width="2.3" stroke-linecap="round" stroke-linejoin="round"/></svg>
<svg style="position:absolute;left:724.8px;top:150.4px" width="25.6" height="20" viewBox="0 0 29 24" preserveAspectRatio="none"><path d="M0 7.9V4.2Q0 .2 4 .2H8.2Q10 .2 11.2 1.2L12.2 2Q13 2.6 14.4 2.6H25Q29 2.6 29 6.6V7.9Z" fill="#8e9398"/><path d="M0 9.7H29V19.8Q29 24 24.8 24H4.2Q0 24 0 19.8Z" fill="#8e9398"/></svg>
<div class="t" style="left:763.2px;top:146.78px;font-size:22px;line-height:29px;color:#262626;letter-spacing:0.857px;">TodoList</div>
<svg style="position:absolute;left:862.2px;top:151.5px" width="8" height="20" viewBox="0 0 8 20" ><path d="M1.4 1.4L6 10L1.4 18.6" fill="none" stroke="#858585" stroke-width="2.3" stroke-linecap="round" stroke-linejoin="round"/></svg>
<svg style="position:absolute;left:887px;top:150.4px" width="25.6" height="20" viewBox="0 0 29 24" preserveAspectRatio="none"><path d="M0 7.9V4.2Q0 .2 4 .2H8.2Q10 .2 11.2 1.2L12.2 2Q13 2.6 14.4 2.6H25Q29 2.6 29 6.6V7.9Z" fill="#8e9398"/><path d="M0 9.7H29V19.8Q29 24 24.8 24H4.2Q0 24 0 19.8Z" fill="#8e9398"/></svg>
<div class="t" style="left:925.0px;top:146.78px;font-size:22px;line-height:29px;color:#262626;letter-spacing:0.426px;">Views</div>
<svg style="position:absolute;left:995.9px;top:151.5px" width="8" height="20" viewBox="0 0 8 20" ><path d="M1.4 1.4L6 10L1.4 18.6" fill="none" stroke="#858585" stroke-width="2.3" stroke-linecap="round" stroke-linejoin="round"/></svg>
<svg style="position:absolute;left:1021.6px;top:149.5px" width="24.4" height="21.5" viewBox="2.4 3.4 18.5 16.6" preserveAspectRatio="none"><path d="M13.543 3.41c4.114 2.47 6.545 7.162 5.549 11.131-.024.093-.05.181-.076.272l.002.001c2.062 2.538 1.5 5.258 1.236 4.745-1.072-2.086-3.066-1.568-4.088-1.043a6.803 6.803 0 0 1-.281.158l-.02.012-.002.002c-2.115 1.123-4.957 1.205-7.812-.022a12.568 12.568 0 0 1-5.64-4.838c.649.48 1.35.902 2.097 1.252 3.019 1.414 6.051 1.311 8.197-.002C9.651 12.73 7.101 9.67 5.146 7.191a10.628 10.628 0 0 1-1.005-1.384c2.34 2.142 6.038 4.83 7.365 5.576C8.69 8.408 6.208 4.743 6.324 4.86c4.436 4.47 8.528 6.996 8.528 6.996.154.085.27.154.36.213.085-.215.16-.437.224-.668.708-2.588-.09-5.548-1.893-7.992z" fill="#f07c4e"/></svg>
<div class="t" style="left:1058.0px;top:146.78px;font-size:22px;line-height:29px;color:#262626;letter-spacing:0.637px;">ItemView</div>
<svg style="position:absolute;left:1164px;top:151.5px" width="8" height="20" viewBox="0 0 8 20" ><path d="M1.4 1.4L6 10L1.4 18.6" fill="none" stroke="#858585" stroke-width="2.3" stroke-linecap="round" stroke-linejoin="round"/></svg>
<div style="position:absolute;left:1188px;top:146px;width:27.6px;height:27.6px;background:#57bbd8;border-radius:6.5px;"></div>
<div class="t" style="left:1196.8px;top:147.94px;font-size:19.5px;line-height:25px;color:#fff;letter-spacing:-3.176px;-webkit-text-stroke:.7px #fff;">P</div>
<div class="t" style="left:1226.3px;top:146.78px;font-size:22px;line-height:29px;color:#262626;letter-spacing:1.160px;">body</div>
<div style="position:absolute;left:546px;top:190px;width:2478px;height:1642px;overflow:hidden">
<div style="position:absolute;left:0px;top:942px;width:2478px;height:44px;background:#edf4fe;"></div>
<div style="position:absolute;left:14px;top:282px;width:10px;height:132px;background:#b2cdfb;border-radius:5px;box-sizing:border-box;border:2px solid #2d70f5;"></div>
<div style="position:absolute;left:14px;top:590px;width:10px;height:132px;background:#b2cdfb;border-radius:5px;box-sizing:border-box;border:2px solid #2d70f5;"></div>
<div style="position:absolute;left:14px;top:942px;width:10px;height:44px;background:#b2cdfb;border-radius:5px;box-sizing:border-box;border:2px solid #2d70f5;"></div>
<div style="position:absolute;left:106px;top:0;width:14px;height:1700px;overflow:hidden">
<div style="position:absolute;left:0px;top:108px;width:14px;height:1139.5px;background:#e8e8e8;border-radius:7px;box-shadow:0 0 0 1.5px rgba(255,255,255,.55);"></div>
<div style="position:absolute;left:0px;top:416px;width:14px;height:787.5px;background:#d1d1d1;border-radius:7px;box-shadow:0 0 0 1.5px rgba(255,255,255,.55);"></div>
<div style="position:absolute;left:0px;top:460px;width:14px;height:699.5px;background:#bfbfbf;border-radius:7px;box-shadow:0 0 0 1.5px rgba(255,255,255,.55);"></div>
<div style="position:absolute;left:0px;top:504px;width:14px;height:611.5px;background:#adadad;border-radius:7px;box-shadow:0 0 0 1.5px rgba(255,255,255,.55);"></div>
<div style="position:absolute;left:0px;top:592px;width:14px;height:127.5px;background:#9e9e9e;border-radius:7px;box-shadow:0 0 0 1.5px rgba(255,255,255,.55);"></div>
<div style="position:absolute;left:0px;top:856px;width:14px;height:171.5px;background:#9e9e9e;border-radius:7px;box-shadow:0 0 0 1.5px rgba(255,255,255,.55);"></div>
<div style="position:absolute;left:0px;top:743px;width:14px;height:2px;background:#e4e4e4;"></div>
<div style="position:absolute;left:0px;top:1296px;width:14px;height:259.5px;background:#e8e8e8;border-radius:7px;box-shadow:0 0 0 1.5px rgba(255,255,255,.55);"></div>
<div style="position:absolute;left:0px;top:1340px;width:14px;height:171.5px;background:#d1d1d1;border-radius:7px;box-shadow:0 0 0 1.5px rgba(255,255,255,.55);"></div>
<div style="position:absolute;left:0px;top:942px;width:14px;height:44px;background:rgba(70,110,170,.13);"></div>
</div>
<div class="t ln" style="right:2380.3px;top:-22.79px;color:#a6a6a6">7</div>
<div class="t ln" style="right:2380.3px;top:21.21px;color:#a6a6a6">8</div>
<div class="t ln" style="right:2380.3px;top:65.21px;color:#a6a6a6">9</div>
<div class="t ln" style="right:2380.3px;top:109.21px;color:#a6a6a6">10</div>
<div class="t ln" style="right:2380.3px;top:153.21px;color:#a6a6a6">11</div>
<div class="t ln" style="right:2380.3px;top:197.21px;color:#a6a6a6">12</div>
<div class="t ln" style="right:2380.3px;top:241.21px;color:#a6a6a6">13</div>
<div class="t ln" style="right:2380.3px;top:285.21px;color:#a6a6a6">14</div>
<div class="t ln" style="right:2380.3px;top:329.21px;color:#a6a6a6">15</div>
<div class="t ln" style="right:2380.3px;top:373.21px;color:#a6a6a6">16</div>
<div class="t ln" style="right:2380.3px;top:417.21px;color:#a6a6a6">17</div>
<div class="t ln" style="right:2380.3px;top:461.21px;color:#a6a6a6">18</div>
<div class="t ln" style="right:2380.3px;top:505.21px;color:#a6a6a6">19</div>
<div class="t ln" style="right:2380.3px;top:549.21px;color:#a6a6a6">20</div>
<div class="t ln" style="right:2380.3px;top:593.21px;color:#a6a6a6">21</div>
<div class="t ln" style="right:2380.3px;top:637.21px;color:#a6a6a6">22</div>
<div class="t ln" style="right:2380.3px;top:681.21px;color:#a6a6a6">23</div>
<div class="t ln" style="right:2380.3px;top:725.21px;color:#a6a6a6">24</div>
<div class="t ln" style="right:2380.3px;top:769.21px;color:#a6a6a6">25</div>
<div class="t ln" style="right:2380.3px;top:813.21px;color:#a6a6a6">26</div>
<div class="t ln" style="right:2380.3px;top:857.21px;color:#a6a6a6">27</div>
<div class="t ln" style="right:2380.3px;top:901.21px;color:#a6a6a6">28</div>
<div class="t ln" style="right:2380.3px;top:943.21px;color:#1f1f1f">29</div>
<div class="t ln" style="right:2380.3px;top:989.21px;color:#a6a6a6">30</div>
<div class="t ln" style="right:2380.3px;top:1033.21px;color:#a6a6a6">31</div>
<div class="t ln" style="right:2380.3px;top:1077.21px;color:#a6a6a6">32</div>
<div class="t ln" style="right:2380.3px;top:1121.21px;color:#a6a6a6">33</div>
<div class="t ln" style="right:2380.3px;top:1165.21px;color:#a6a6a6">34</div>
<div class="t ln" style="right:2380.3px;top:1209.21px;color:#a6a6a6">35</div>
<div class="t ln" style="right:2380.3px;top:1253.21px;color:#a6a6a6">36</div>
<div class="t ln" style="right:2380.3px;top:1297.21px;color:#a6a6a6">37</div>
<div class="t ln" style="right:2380.3px;top:1341.21px;color:#a6a6a6">38</div>
<div class="t ln" style="right:2380.3px;top:1385.21px;color:#a6a6a6">39</div>
<div class="t ln" style="right:2380.3px;top:1429.21px;color:#a6a6a6">40</div>
<div class="t ln" style="right:2380.3px;top:1473.21px;color:#a6a6a6">41</div>
<div class="t ln" style="right:2380.3px;top:1517.21px;color:#a6a6a6">42</div>
<div class="t ln" style="right:2380.3px;top:1561.21px;color:#a6a6a6">43</div>
<div class="t m" style="left:144px;top:22.20px;font-size:33px;line-height:44px;color:#262626;letter-spacing:-0.023px;"><span class="k">import</span> SwiftUI</div>
<div class="t m" style="left:144px;top:110.20px;font-size:33px;line-height:44px;color:#262626;letter-spacing:-0.023px;"><span class="k">struct</span> <span class="td">ItemView</span>: <span class="oc">View</span> {</div>
<div class="t m" style="left:144px;top:198.20px;font-size:33px;line-height:44px;color:#262626;letter-spacing:-0.023px;">    <span class="oc">@Binding</span> <span class="k">var</span> <span class="od">currentItem</span>: <span class="pc">TodoItem</span></div>
<div class="t m" style="left:144px;top:286.20px;font-size:33px;line-height:44px;color:#262626;letter-spacing:-0.023px;">    <span class="c">// Access the view model through the environment</span></div>
<div class="t m" style="left:144px;top:330.20px;font-size:33px;line-height:44px;color:#262626;letter-spacing:-0.023px;">    <span class="oc">@Environment</span>(<span class="pc">TodoListViewModel</span>.<span class="k">self</span>) <span class="k">var</span> <span class="od">viewModel</span></div>
<div class="t m" style="left:144px;top:418.20px;font-size:33px;line-height:44px;color:#262626;letter-spacing:-0.023px;">    <span class="k">var</span> <span class="od">body</span>: <span class="k">some</span> <span class="oc">View</span> {</div>
<div class="t m" style="left:144px;top:462.20px;font-size:33px;line-height:44px;color:#262626;letter-spacing:-0.023px;">        <span class="oc">Label</span>(</div>
<div class="t m" style="left:144px;top:506.20px;font-size:33px;line-height:44px;color:#262626;letter-spacing:-0.023px;">            <span class="of">title</span>: {</div>
<div class="t m" style="left:144px;top:550.20px;font-size:33px;line-height:44px;color:#262626;letter-spacing:-0.023px;">                <span class="oc">TextField</span>(<span class="s">""</span>, <span class="of">text</span>: <span class="pf">$currentItem</span>.<span class="of">title</span>, <span class="of">axis</span>: .<span class="of">vertical</span>)</div>
<div class="t m" style="left:144px;top:594.20px;font-size:33px;line-height:44px;color:#262626;letter-spacing:-0.023px;">                    .<span class="of">onSubmit</span> {</div>
<div class="t m" style="left:144px;top:638.20px;font-size:33px;line-height:44px;color:#262626;letter-spacing:-0.023px;">                        <span class="pf">viewModel</span>.<span class="pf">update</span>(<span class="pf">todo</span>: <span class="pf">currentItem</span>)</div>
<div class="t m" style="left:144px;top:682.20px;font-size:33px;line-height:44px;color:#262626;letter-spacing:-0.023px;">                    }</div>
<div class="t m" style="left:144px;top:726.20px;font-size:33px;line-height:44px;color:#262626;letter-spacing:-0.023px;">            }, <span class="of">icon</span>: {</div>
<div class="t m" style="left:144px;top:770.20px;font-size:33px;line-height:44px;color:#262626;letter-spacing:-0.023px;">                <span class="oc">Image</span>(<span class="of">systemName</span>: <span class="pf">currentItem</span>.<span class="pf">done</span> == <span class="k">true</span> ? <span class="s">"checkmark.circle"</span> : <span class="s">"circle"</span>)</div>
<div class="t m" style="left:144px;top:814.20px;font-size:33px;line-height:44px;color:#262626;letter-spacing:-0.023px;">                    <span class="c">// Tap to mark as done</span></div>
<div class="t m" style="left:144px;top:858.20px;font-size:33px;line-height:44px;color:#262626;letter-spacing:-0.023px;">                    .<span class="of">onTapGesture</span> {</div>
<div class="t m" style="left:144px;top:902.20px;font-size:33px;line-height:44px;color:#262626;letter-spacing:-0.023px;">                        <span class="pf">currentItem</span>.<span class="pf">done</span>.<span class="of">toggle</span>()</div>
<div class="t m" style="left:144px;top:946.20px;font-size:33px;line-height:44px;color:#262626;letter-spacing:-0.023px;">                        <span class="pf">viewModel</span>.<span class="pf">update</span>(<span class="pf">todo</span>: <span class="pf">currentItem</span>)</div>
<div class="t m" style="left:144px;top:990.20px;font-size:33px;line-height:44px;color:#262626;letter-spacing:-0.023px;">                    }</div>
<div class="t m" style="left:144px;top:1078.20px;font-size:33px;line-height:44px;color:#262626;letter-spacing:-0.023px;">            }</div>
<div class="t m" style="left:144px;top:1122.20px;font-size:33px;line-height:44px;color:#262626;letter-spacing:-0.023px;">        )</div>
<div class="t m" style="left:144px;top:1166.20px;font-size:33px;line-height:44px;color:#262626;letter-spacing:-0.023px;">    }</div>
<div class="t m" style="left:144px;top:1210.20px;font-size:33px;line-height:44px;color:#262626;letter-spacing:-0.023px;">}</div>
<div class="t m" style="left:144px;top:1298.20px;font-size:33px;line-height:44px;color:#262626;letter-spacing:-0.023px;"><span class="of">#Preview</span> {</div>
<div class="t m" style="left:144px;top:1342.20px;font-size:33px;line-height:44px;color:#262626;letter-spacing:-0.023px;">    <span class="oc">List</span> {</div>
<div class="t m" style="left:144px;top:1386.20px;font-size:33px;line-height:44px;color:#262626;letter-spacing:-0.023px;">        <span class="pc">ItemView</span>(<span class="pc">currentItem</span>: .<span class="of">constant</span>(<span class="of">firstItem</span>))</div>
<div class="t m" style="left:144px;top:1430.20px;font-size:33px;line-height:44px;color:#262626;letter-spacing:-0.023px;">        <span class="pc">ItemView</span>(<span class="pc">currentItem</span>: .<span class="of">constant</span>(<span class="of">secondItem</span>))</div>
<div class="t m" style="left:144px;top:1474.20px;font-size:33px;line-height:44px;color:#262626;letter-spacing:-0.023px;">    }</div>
<div class="t m" style="left:144px;top:1518.20px;font-size:33px;line-height:44px;color:#262626;letter-spacing:-0.023px;">}</div>
</div>
<div style="position:absolute;left:546px;top:1832px;width:2478px;height:2px;background:#e2e2e2;"></div>
<svg style="position:absolute;left:568.8px;top:1852px" width="30" height="18" viewBox="0 0 30 18" ><path d="M3.4 0H22.4Q24 0 25.2 1.3L29.4 7.6Q30 9 29.4 10.4L25.2 16.7Q24 18 22.4 18H3.4Q0 18 0 14.6V3.4Q0 0 3.4 0Z" fill="#3478f6"/></svg>
<div style="position:absolute;left:614px;top:1849.5px;width:2px;height:23.5px;background:#e2e2e2;"></div>
<svg style="position:absolute;left:636px;top:1847.5px" width="20" height="27" viewBox="0 0 20 27" ><g fill="none" stroke="#727272" stroke-width="1.9" stroke-linecap="round" stroke-linejoin="round"><rect x="1.4" y="1.2" width="5.4" height="24.6" rx="2"/><rect x="13.2" y="1.2" width="5.4" height="24.6" rx="2"/></g></svg>
<svg style="position:absolute;left:692.5px;top:1851.5px" width="27" height="23" viewBox="0 0 27 23" ><g fill="none" stroke="#bcbcbc" stroke-width="1.8" stroke-linecap="butt" stroke-linejoin="miter"><path d="M1 13.6L13.2 1.6L25 13.2"/><path d="M18.6 13.6H25.4V6.8"/><rect x="5" y="17.4" width="16.4" height="4.2"/></g></svg>
<svg style="position:absolute;left:756.5px;top:1848px" width="19" height="26.5" viewBox="0 0 19 26.5" ><g fill="none" stroke="#bcbcbc" stroke-width="1.8" stroke-linecap="butt" stroke-linejoin="miter"><path d="M9.5 0V17.4M2.8 10.6L9.5 17.4L16.2 10.6"/><rect x="1" y="20.9" width="17" height="4.2"/></g></svg>
<svg style="position:absolute;left:816.5px;top:1848px" width="19" height="26.5" viewBox="0 0 19 26.5" ><g fill="none" stroke="#bcbcbc" stroke-width="1.8" stroke-linecap="butt" stroke-linejoin="miter"><path d="M9.5 17.6V1.2M2.8 7.6L9.5 1L16.2 7.6"/><rect x="1" y="20.9" width="17" height="4.2"/></g></svg>
<div style="position:absolute;left:856px;top:1849.5px;width:2px;height:23.5px;background:#e2e2e2;"></div>
<svg style="position:absolute;left:876.5px;top:1848px" width="23" height="27" viewBox="0 0 23 27" ><g fill="none" stroke="#727272" stroke-width="1.9" stroke-linecap="butt" stroke-linejoin="miter"><path d="M1.2 20.8V6.6L13.4 1M5 22.8V8.6L17.2 3"/><path d="M9.2 11L21.6 5.4V19.6L9.2 25.4Z"/></g></svg>
<svg style="position:absolute;left:934.5px;top:1848px" width="27" height="27" viewBox="0 0 27 27" ><g fill="none" stroke="#727272" stroke-width="1.9" stroke-linecap="round" stroke-linejoin="round"><circle cx="5.4" cy="5.2" r="4.1"/><circle cx="21.6" cy="13.2" r="4.1"/><circle cx="5.4" cy="21.2" r="4.1"/><path d="M9.2 7L17.8 11.4M17.8 15L9.2 19.4"/></g></svg>
<svg style="position:absolute;left:996.5px;top:1847.5px" width="23" height="27" viewBox="0 0 23 27" ><g fill="none" stroke="#727272" stroke-width="1.9" stroke-linecap="round" stroke-linejoin="round"><rect x="1.2" y="1.4" width="20.6" height="10" rx="5"/><rect x="1.2" y="15.6" width="20.6" height="10" rx="5"/><circle cx="6.6" cy="6.4" r="2.6" fill="#727272" stroke="none"/><circle cx="16.4" cy="20.6" r="2.6" fill="#727272" stroke="none"/></g></svg>
<div style="position:absolute;left:1038px;top:1849.5px;width:2px;height:23.5px;background:#e2e2e2;"></div>
<svg style="position:absolute;left:1058px;top:1849px" width="23.2" height="23.2" viewBox="0 0 30 30" ><rect x="0" y="0" width="30" height="30" rx="6" fill="#818181"/><g transform="translate(15 14.6) scale(1.13) translate(-15 -14.6)"><g fill="none" stroke="#fff" stroke-width="2" stroke-linecap="round"><path d="M16.6 7.4 L9.2 20.6"/><path d="M13.4 7.4 L15 10.2"/><path d="M16.9 13.6 L20.9 20.6"/><path d="M6.2 18.6 H15.4"/><path d="M19.3 18.6 H23.8"/><path d="M7.6 21.8 L8.3 20.6"/></g></g></svg>
<div class="t" style="left:1095.2px;top:1846.88px;font-size:22px;line-height:29px;color:#262626;letter-spacing:0.857px;">TodoList</div>
<div class="t" style="left:2774.9px;top:1847.08px;font-size:22px;line-height:29px;color:#7b7b7b;letter-spacing:0.890px;">Line: 29</div>
<div class="t" style="left:2874.0px;top:1847.08px;font-size:22px;line-height:29px;color:#7b7b7b;letter-spacing:0.788px;">Col: 9</div>
<div style="position:absolute;left:2954px;top:1849.5px;width:2px;height:23.5px;background:#e2e2e2;"></div>
<svg style="position:absolute;left:2973px;top:1848px" width="27" height="26" viewBox="0 0 27 26" ><g fill="none" stroke="#727272" stroke-width="2" stroke-linecap="round" stroke-linejoin="round"><rect x="1.2" y="1.2" width="24" height="23.4" rx="4.6"/><rect x="4.8" y="15.8" width="16.8" height="5.4" rx="1.6" fill="#727272" stroke="none"/></g></svg>
<svg style="position:absolute;left:23.1px;top:1849.1px" width="22" height="22" viewBox="0 0 22 22" ><g fill="none" stroke="#4c4c4c" stroke-width="2.5" stroke-linecap="round" stroke-linejoin="round"><path d="M11 1.4V20.6M1.4 11H20.6"/></g></svg>
<div style="position:absolute;left:55.8px;top:1837.8px;width:477.8px;height:44px;box-sizing:border-box;background:#e8e8e8;border:1.5px solid #d2d2d2;border-radius:11px"></div>
<svg style="position:absolute;left:65px;top:1846.8px" width="52" height="26" viewBox="0 0 52 26" ><g fill="none" stroke="#6a6a6a" stroke-width="1.9" stroke-linecap="round" stroke-linejoin="round"><rect x="1.1" y="1.1" width="49.8" height="24" rx="12"/><path d="M10.6 9H22M12.6 13.1H20M14.8 17.2H17.8" stroke-width="2" stroke-linecap="butt"/><path d="M32.6 11L37 15.8L41.4 11" stroke-width="2.3"/></g></svg>
<div class="t" style="left:124.8px;top:1844.13px;font-size:23px;line-height:30px;color:#b2b2b2;letter-spacing:0.066px;">Filter</div>
<svg style="position:absolute;left:462px;top:1847px" width="26" height="26" viewBox="0 0 26 26" ><g fill="none" stroke="#6a6a6a" stroke-width="1.9" stroke-linecap="round" stroke-linejoin="round"><circle cx="13" cy="13" r="11.8"/><path d="M13.6 6.4V13.6H7.8" stroke-width="1.9"/></g></svg>
<svg style="position:absolute;left:495.5px;top:1847px" width="27" height="26" viewBox="0 0 27 26" ><g fill="none" stroke="#6a6a6a" stroke-width="1.9" stroke-linecap="butt" stroke-linejoin="miter"><rect x="1.2" y="1.2" width="24.6" height="23.6" rx="2.4"/><path d="M5.6 13H13.4M9.5 9.2V16.8M16.6 13H21.8" stroke-width="2"/></g></svg>
</div>
</body></html>
